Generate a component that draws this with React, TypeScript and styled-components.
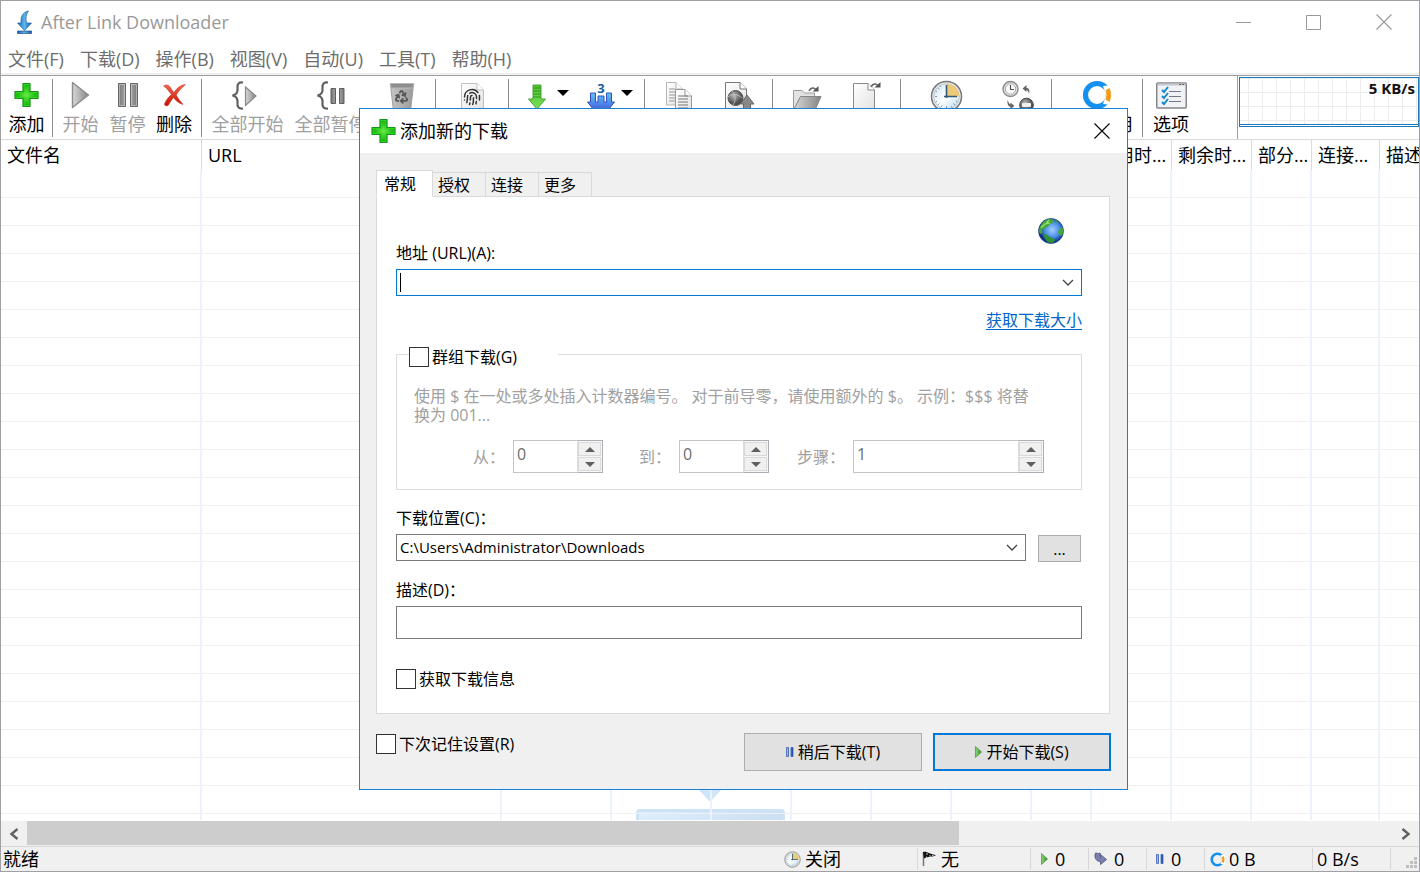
import React from "react";
import styled, { createGlobalStyle } from "styled-components";
import { Fingerprint, Recycle } from "lucide-react";

const GlobalStyle = createGlobalStyle`
  *, *::before, *::after { box-sizing: border-box; }
  html, body, #root { height: 100%; }
  body { margin: 0; background: #fff; overflow: hidden; }
  body, button, input, select {
    font-family: "Open Sans", "Noto Sans CJK SC", sans-serif;
    font-size: 18px;
    color: #000;
  }
  button { border: 0; background: none; padding: 0; margin: 0; }
  input { margin: 0; }
  svg { display: block; flex: none; overflow: visible; }
`;

/* ---------- main window ---------- */

const Window = styled.div`
  position: relative;
  display: flex;
  flex-direction: column;
  height: 100vh;
  border: 1px solid #a0a0a4;
  background: #fff;
  overflow: hidden;
`;

const TitleBar = styled.header`
  display: flex;
  align-items: center;
  height: 44px;
  flex: none;
  padding: 0 0 2px 14px;
`;

const Title = styled.h1`
  flex: 1;
  margin: 0;
  padding-left: 6px;
  font-size: 18px;
  line-height: 24px;
  font-weight: 400;
  color: #999;
`;

const CaptionButton = styled.button`
  width: 70px;
  height: 42px;
  display: flex;
  align-items: center;
  justify-content: center;
`;

const MenuBar = styled.nav`
  display: flex;
  gap: 16px;
  height: 31px;
  flex: none;
  padding-left: 7px;
  border-bottom: 1px solid #a0a0a0;
  box-shadow: inset 0 -2px #f0f0f0;
`;

const MenuItem = styled.button`
  height: 28px;
  line-height: 28px;
  color: #6d6d6d;
  white-space: nowrap;
`;

const ToolBar = styled.div`
  display: flex;
  height: 64px;
  flex: none;
  border-bottom: 1px solid #d9d9d9;
`;

const ToolGroup = styled.div<{ $flush?: boolean }>`
  display: flex;
  flex: none;
  margin: 3px 0 2px;
  padding: 0 ${(p) => (p.$flush ? 0 : 4)}px;
  border-right: 1px solid #8c8c8c;
`;

const SplitGroup = styled(ToolGroup)`
  gap: 12px;
  padding: 0 9px 0 10px;
`;

const ToolButton = styled.button<{ $width: number }>`
  display: flex;
  flex-direction: column;
  align-items: center;
  width: ${(p) => p.$width}px;
  white-space: nowrap;
  &:disabled { color: #a0a0a0; }
`;

const ToolIcon = styled.span`
  display: flex;
  align-items: center;
  justify-content: center;
  height: 35px;
`;

const ToolLabel = styled.span`
  line-height: 26px;
`;

const SplitTool = styled.div`
  display: flex;
`;

const CaretButton = styled.button`
  display: flex;
  justify-content: center;
  width: 16px;
  padding-top: 11px;
`;

const OptionsTool = styled.div`
  display: flex;
  margin: 3px 0 2px;
`;

const ToolSpacer = styled.div`
  flex: 1;
  display: flex;
  justify-content: flex-end;
`;

const SpeedGraph = styled.div`
  width: 182px;
  height: 63px;
  border-left: 1px solid #a0a0a0;
  padding: 1px 0 0 1px;
`;

const GraphBox = styled.div`
  height: 50px;
  padding: 0 3px;
  border: 1px solid #1979be;
  box-shadow: inset 0 -1px #fff, inset 0 -2px #1979be;
  background-image: linear-gradient(90deg, #ececec 1px, transparent 1px),
    linear-gradient(#ececec 1px, transparent 1px);
  background-size: 14px 14px;
  background-position: 8px 0;
  font-size: 15px;
  line-height: 20px;
  font-weight: 700;
  text-align: right;
  color: #111;
`;

/* ---------- download list ---------- */

const ListArea = styled.main`
  position: relative;
  flex: 1;
  min-height: 0;
  overflow: hidden;
`;

const DropHint = styled.div`
  position: absolute;
  left: 0;
  right: 0;
  bottom: 0;
  display: flex;
  flex-direction: column;
  align-items: center;
  gap: 8px;
`;

const DropHintBox = styled.div`
  width: 149px;
  height: 11px;
  border-radius: 4px 4px 0 0;
  background: linear-gradient(100deg, #dbeefd, #cbdff2);
  border: 3px solid #cbe2f7;
  border-bottom: 0;
`;

const ListTable = styled.table`
  position: relative;
  width: 100%;
  table-layout: fixed;
  border-collapse: separate;
  border-spacing: 0;
`;

const ListHead = styled.th`
  height: 30px;
  padding: 0 0 0 6px;
  border-right: 1px solid #dcdcdc;
  background: #fff;
  font-weight: 400;
  line-height: 30px;
  text-align: left;
  white-space: nowrap;
  overflow: hidden;
  &:last-child { border-right: 0; }
`;

const ListCell = styled.td`
  height: 28px;
  padding: 0;
  border-right: 2px solid #ecf2fc;
  border-bottom: 1px solid #f0f0f0;
  &:last-child { border-right: 0; }
`;

const ScrollBar = styled.div`
  display: flex;
  height: 25px;
  flex: none;
  margin-top: 1px;
  background: #f0f0f0;
`;

const ScrollButton = styled.button`
  display: flex;
  align-items: center;
  justify-content: center;
  width: 26px;
`;

const ScrollThumb = styled.div`
  flex: 932;
  height: 24px;
  background: #cdcdcd;
`;

const ScrollRest = styled.div`
  flex: 434;
`;

const StatusBar = styled.footer`
  display: grid;
  grid-template-columns: 1fr 138px 113px 58px 58px 58px 108px 78px 28px;
  height: 25px;
  flex: none;
  border-top: 1px solid #d7d7d7;
  background: #f0f0f0;
`;

const StatusCell = styled.div<{ $divider?: boolean; $indent?: number; $gap?: number }>`
  display: flex;
  align-items: center;
  gap: ${(p) => p.$gap ?? 4}px;
  padding-left: ${(p) => p.$indent ?? 4}px;
  margin: 1px 0;
  border-right: 1px solid ${(p) => (p.$divider ? "#d7d7d7" : "transparent")};
  line-height: 22px;
  white-space: nowrap;
`;

const SizeGrip = styled.div`
  display: flex;
  justify-content: flex-end;
  align-items: flex-end;
  padding: 0 2px 2px 0;
`;

/* ---------- add dialog ---------- */

const Dialog = styled.section`
  position: absolute;
  left: 358px;
  top: 107px;
  width: 769px;
  border: 1px solid #1a80d2;
  background: #f0f0f0;
  button, input, label, a, p { font-size: 16px; }
`;

const DialogTitleBar = styled.header`
  display: flex;
  align-items: center;
  gap: 4px;
  height: 44px;
  padding: 0 17px 0 11px;
  background: #fff;
`;

const DialogTitle = styled.h2`
  flex: 1;
  margin: 0;
  font-size: 18px;
  line-height: 24px;
  font-weight: 400;
`;

const DialogBody = styled.form`
  padding: 17px 16px 18px;
`;

const TabList = styled.div`
  display: flex;
  align-items: flex-end;
  position: relative;
  margin-bottom: -1px;
`;

const Tab = styled.button<{ $active?: boolean }>`
  width: ${(p) => (p.$active ? 57 : 53)}px;
  height: ${(p) => (p.$active ? 27 : 25)}px;
  padding: 0 0 0 ${(p) => (p.$active ? 7 : 5)}px;
  border: 1px solid #d9d9d9;
  border-left-width: ${(p) => (p.$active ? 1 : 0)}px;
  border-bottom-color: ${(p) => (p.$active ? "#fff" : "#d9d9d9")};
  background: ${(p) => (p.$active ? "#fff" : "#f0f0f0")};
  line-height: 24px;
  text-align: left;
`;

const Panel = styled.div`
  display: flex;
  flex-direction: column;
  margin-right: 1px;
  padding: 21px 27px 24px 19px;
  border: 1px solid #d9d9d9;
  background: #fff;
`;

const GlobeRow = styled.div`
  display: flex;
  justify-content: flex-end;
  height: 25px;
  padding-right: 18px;
`;

const FieldLabel = styled.label<{ $spaced?: boolean }>`
  margin-top: ${(p) => (p.$spaced ? 18 : 0)}px;
  margin-bottom: 6px;
  line-height: 20px;
`;

const Combo = styled.div<{ $focused?: boolean }>`
  position: relative;
  display: flex;
  align-items: center;
  flex: 1;
  height: 27px;
  padding-left: 3px;
  border: 1px solid ${(p) => (p.$focused ? "#0078d7" : "#7a7a7a")};
  background: #fff;
`;

const TextCursor = styled.span`
  width: 1px;
  height: 19px;
  background: #000;
`;

const ComboInput = styled.input`
  flex: 1;
  min-width: 0;
  height: 25px;
  padding: 0;
  border: 0;
  outline: 0;
  background: transparent;
  caret-color: transparent;
`;

const ComboSelect = styled.select`
  flex: 1;
  height: 25px;
  padding: 0 0 2px;
  border: 0;
  outline: 0;
  appearance: none;
  background: transparent;
  font-size: 15px;
`;

const ComboArrow = styled.span`
  display: flex;
  padding: 0 7px;
  pointer-events: none;
`;

const Row = styled.div`
  display: flex;
  gap: 12px;
`;

const SizeLink = styled.a`
  align-self: flex-end;
  margin-top: 14px;
  line-height: 20px;
  color: #0066cc;
  text-underline-offset: 3px;
`;

const GroupBox = styled.fieldset`
  min-width: 0;
  margin: 17px 0 0;
  padding: 0 12px 16px;
  border: 1px solid #dcdcdc;
`;

const GroupLegend = styled.legend`
  width: 149px;
  height: 14px;
  padding: 0;
`;

const Check = styled.label`
  display: flex;
  align-items: center;
  gap: 3px;
  line-height: 20px;
`;

const CheckBox = styled.input`
  appearance: none;
  width: 20px;
  height: 20px;
  border: 1px solid #333;
  background: #fff;
`;

const Hint = styled.p`
  margin: 26px 0 15px;
  padding: 0 32px 0 5px;
  line-height: 19px;
  color: #a0a0a0;
`;

const SpinRow = styled.div`
  display: grid;
  grid-template-columns: 104px 90px 76px 90px 84px minmax(0, 1fr);
  padding-right: 25px;
`;

const SpinLabel = styled.label`
  padding-right: 8px;
  height: 33px;
  line-height: 34px;
  text-align: right;
  color: #a0a0a0;
`;

const Spin = styled.div`
  display: flex;
  min-width: 0;
  height: 33px;
  border: 1px solid #c4c4c8;
`;

const SpinInput = styled.input`
  flex: 1;
  min-width: 0;
  height: 25px;
  padding: 0 0 0 3px;
  border: 0;
  appearance: textfield;
  background: transparent;
  color: #6d6d6d;
  &::-webkit-inner-spin-button { appearance: none; }
`;

const SpinButtons = styled.div`
  display: flex;
  flex-direction: column;
  gap: 1px;
  width: 26px;
  margin: -1px -1px -1px 0;
  padding: 1px 1px 1px 0;
  border: 1px solid #adadb5;
  border-left-color: #dcdcdc;
  background: #f7f7f7;
`;

const SpinButton = styled.button`
  flex: 1;
  display: flex;
  align-items: center;
  justify-content: center;
  border: 1px solid #d9d9d9;
  background: #f0f0f0;
`;

const PlainButton = styled.button`
  width: 43px;
  height: 27px;
  margin: 1px 1px 0 0;
  border: 1px solid #adadad;
  background: #e1e1e1;
`;

const TextField = styled.input`
  height: 33px;
  padding: 0 4px;
  border: 1px solid #7a7a7a;
  outline: 0;
`;

const InfoCheck = styled(Check)`
  margin-top: 30px;
`;

const DialogFooter = styled.footer`
  display: flex;
  align-items: flex-start;
  gap: 11px;
  padding-top: 19px;
`;

const RememberCheck = styled(Check)`
  flex: 1;
  margin-top: 1px;
`;

const ActionButton = styled.button<{ $primary?: boolean }>`
  display: flex;
  align-items: center;
  justify-content: center;
  gap: 4px;
  width: 178px;
  height: 38px;
  border: ${(p) => (p.$primary ? "2px solid #0078d7" : "1px solid #adadad")};
  background: #e1e1e1;
  line-height: 20px;
`;

/* ---------- icons ---------- */

const GradientDefs = styled.svg`
  position: absolute;
`;

const Gradients = () => (
  <GradientDefs width="0" height="0" aria-hidden="true">
    <defs>
      <radialGradient id="plus"><stop offset="0" stopColor="#6be84b" /><stop offset="1" stopColor="#0fbb08" /></radialGradient>
      <linearGradient id="grey"><stop offset="0" stopColor="#d8d8d8" /><stop offset="1" stopColor="#858585" /></linearGradient>
      <linearGradient id="metal"><stop offset="0" stopColor="#777" /><stop offset=".5" stopColor="#b4b4b4" /><stop offset="1" stopColor="#777" /></linearGradient>
      <linearGradient id="bin" x1="0" y1="0" x2="1" y2="0"><stop offset="0" stopColor="#c4c4c4" /><stop offset=".5" stopColor="#b0b0b0" /><stop offset="1" stopColor="#9a9a9a" /></linearGradient>
      <linearGradient id="red" x1="0" y1="0" x2="0" y2="1"><stop offset="0" stopColor="#f06a50" /><stop offset="1" stopColor="#c90d00" /></linearGradient>
      <linearGradient id="paper" x1="0" y1="0" x2="1" y2="1"><stop offset="0" stopColor="#fff" /><stop offset="1" stopColor="#e2e2e2" /></linearGradient>
      <linearGradient id="green" x1="0" y1="0" x2="0" y2="1"><stop offset="0" stopColor="#4fc02f" /><stop offset="1" stopColor="#7be05a" /></linearGradient>
      <linearGradient id="blue" x1="0" y1="0" x2="0" y2="1"><stop offset="0" stopColor="#5fc4f5" /><stop offset="1" stopColor="#4254dc" /></linearGradient>
      <radialGradient id="sea" cx=".55" cy=".45"><stop offset="0" stopColor="#a4ceff" /><stop offset=".6" stopColor="#4a8fe8" /><stop offset="1" stopColor="#0b2f8a" /></radialGradient>
      <radialGradient id="ball" cx=".4" cy=".35"><stop offset="0" stopColor="#bbb" /><stop offset="1" stopColor="#505050" /></radialGradient>
      <linearGradient id="face" x1="0" y1="0" x2="1" y2="1"><stop offset="0" stopColor="#cfe3f2" /><stop offset=".5" stopColor="#fff" /><stop offset="1" stopColor="#bcd8ec" /></linearGradient>
      <linearGradient id="app" x1="0" y1="0" x2="1" y2="0"><stop offset="0" stopColor="#1565b8" /><stop offset=".5" stopColor="#5db4ee" /><stop offset="1" stopColor="#1258a4" /></linearGradient>
      <linearGradient id="leaf"><stop offset="0" stopColor="#8fd67c" /><stop offset="1" stopColor="#2e8a24" /></linearGradient>
      <linearGradient id="bars"><stop offset="0" stopColor="#a9c8f8" /><stop offset="1" stopColor="#1c3f9c" /></linearGradient>
    </defs>
  </GradientDefs>
);

const AppIcon = () => (
  <svg width="20" height="24" viewBox="0 0 20 24">
    <path d="M13.500 1C7.500 2 5.500 7 6 13H2.500L9.500 20.500L16.500 13H11.500C10.500 8 11 4 13.500 1Z" fill="url(#app)" stroke="#1a5c9e" strokeWidth=".6" />
    <path d="M2.500 21H16.500V23.500H2.500Z" fill="url(#app)" stroke="#0f3f75" strokeWidth=".6" />
  </svg>
);

const PlusIcon = () => (
  <svg width="25" height="26" viewBox="0 0 25 26">
    <path d="M9 1.500H16V9.500H24V16.500H16V24.500H9V16.500H1V9.500H9Z" fill="#32d41d" stroke="#17921a" strokeWidth="1.200" strokeLinejoin="round" />
    <path d="M10.500 3H14.500V11H22.500V15H14.500V23H10.500V15H2.500V11H10.500Z" fill="url(#plus)" />
  </svg>
);

const PlayIcon = () => (
  <svg width="19" height="28" viewBox="0 0 19 28">
    <path d="M1.500 1.500L17.500 14L1.500 26.500Z" fill="url(#grey)" stroke="#8c8c8c" strokeWidth="1.400" strokeLinejoin="round" />
  </svg>
);

const PauseIcon = () => (
  <svg width="22" height="26" viewBox="0 0 22 26">
    <path d="M1.500 1.500H8.500V24.500H1.500ZM13.500 1.500H20.500V24.500H13.500Z" fill="url(#metal)" stroke="#666" />
    <path d="M2.500 2.500H7.500V23.500H2.500ZM14.500 2.500H19.500V23.500H14.500Z" fill="none" stroke="#c8c8c8" strokeWidth=".7" />
  </svg>
);

const DeleteIcon = () => (
  <svg width="26" height="26" viewBox="0 0 26 26">
    <path d="M2.500 4C5.500 2 8 3 9.500 5.500C10.500 7.500 12 9.500 13 10.500C16 6 19.500 3 24.500 2.500C21 5.500 17.500 9 15.200 13C17.500 17 19.500 19.500 22 22.500C17.500 21 14.500 18.500 12.500 15.500C10 18.500 8.500 21 7.500 23C6 24.500 3.500 24 3.500 22C4.500 18.500 7.500 15 10.500 12.500C8 9.500 6 6 2.500 4Z" fill="url(#red)" stroke="#c62316" strokeWidth=".5" />
  </svg>
);

const Brace = () => (
  <path d="M12 1.500C8 1 6 3 6.500 7C7 11 6 13.500 1.500 14.500C6 15.500 7 18 6.500 22C6 26 8 28 12 27.500" fill="none" stroke="#606060" strokeWidth="2.200" />
);

const PlayAllIcon = () => (
  <svg width="34" height="29" viewBox="0 0 34 29">
    <Brace />
    <path d="M14.500 6L25 15L14.500 24.500Z" fill="url(#grey)" stroke="#888" strokeWidth="1.200" />
  </svg>
);

const PauseAllIcon = () => (
  <svg width="30" height="29" viewBox="0 0 30 29">
    <Brace />
    <path d="M15 7.500H19.500V22.500H15ZM23.500 7.500H28V22.500H23.500Z" fill="url(#metal)" stroke="#5f5f5f" />
  </svg>
);

const IconStack = styled.span`
  display: grid;
  place-items: center;
  > * { grid-area: 1 / 1; }
`;

const BinIcon = () => (
  <IconStack>
    <svg width="26" height="30" viewBox="0 0 26 30">
      <path d="M1.500 3L4.500 29H21.500L24.500 3Z" fill="url(#bin)" stroke="#a0a0a0" />
      <path d="M1 1.500H25L24 6H2Z" fill="#8e8e8e" stroke="#b8b8b8" />
    </svg>
    <Recycle size={15} strokeWidth={3} color="#585858" />
  </IconStack>
);

const Sheet = ({ x = 0, y = 0, w = 22, h = 28, stroke = "#8a8a8a" }) => (
  <g transform={`translate(${x} ${y})`}>
    <path d={`M.5 .5H${w - 7}L${w - 0.5} 7V${h}H.5Z`} fill="url(#paper)" stroke={stroke} />
    <path d={`M${w - 7} .5V7H${w - 0.5}`} fill="#fff" stroke={stroke} />
  </g>
);

const FingerIcon = () => (
  <IconStack>
    <svg width="26" height="32" viewBox="0 0 26 32"><Sheet x={2} y={2} w={23} h={29} stroke="#c0c0c0" /></svg>
    <Fingerprint size={18} strokeWidth={2} color="#333" />
  </IconStack>
);

const DownIcon = () => (
  <svg width="20" height="26" viewBox="0 0 20 26">
    <path d="M6 1H14V15H18.500L10 25L1.500 15H6Z" fill="url(#green)" stroke="#4ba531" strokeLinejoin="round" />
    <path d="M6 4H14M6 7H14M6 10H14M6 13H14" stroke="#2f9a1c" strokeWidth="1.200" />
  </svg>
);

const TripleIcon = () => (
  <svg width="30" height="30" viewBox="0 0 30 30">
    <path d="M4.500 11H9.500V20H12V14H18V20H20.500V11H25.500V20H28.500L22.500 27.500L19.500 25L15 30L10.500 25L7.500 27.500L1.500 20H4.500Z" fill="url(#blue)" stroke="#3550bd" />
    <text x="15" y="11" textAnchor="middle" fontSize="13" fontWeight="700" fill="#17609f">3</text>
  </svg>
);

const CaretDown = () => (
  <svg width="12" height="6" viewBox="0 0 12 6"><path d="M0 0H12L6 6Z" fill="#000" /></svg>
);

const CopyIcon = () => (
  <svg width="28" height="30" viewBox="0 0 28 30">
    <Sheet x={1} y={0} w={17} h={23} stroke="#b5b5b5" />
    <path d="M4 7H10M4 10H10M4 13H10M4 16H10M4 19H10" stroke="#999" />
    <Sheet x={10} y={7} w={17} h={23} stroke="#999" />
    <path d="M13 14H23M13 17H23M13 20H23M13 23H23M13 26H23" stroke="#777" />
  </svg>
);

const WebPageIcon = () => (
  <svg width="30" height="30" viewBox="0 0 30 30">
    <Sheet x={1} y={0} w={22} h={29} stroke="#777" />
    <circle cx="11.500" cy="16" r="7.500" fill="url(#ball)" stroke="#555" />
    <path d="M4 15C8 11 14 12 18 16M8 9C12 13 12 19 9 23" fill="none" stroke="#c5c5c5" strokeWidth=".8" />
    <path d="M23 13L30 22H26.500V29H19.500V22H16.500Z" fill="#888" stroke="#666" />
  </svg>
);

const CurvedArrow = ({ x, y }: { x: number; y: number }) => (
  <g transform={`translate(${x} ${y})`}>
    <path d="M0 3C2 -1 6 -1 7.500 3" fill="none" stroke="#666" strokeWidth="1.600" />
    <path d="M3.500 3.500H9.500V-2Z" fill="#555" />
  </g>
);

const FolderIcon = () => (
  <svg width="30" height="30" viewBox="0 0 30 30">
    <path d="M1.500 28V8.500H10L12.500 11H22.500V28Z" fill="#e2e2e2" stroke="#9a9a9a" />
    <path d="M1.500 28L8.500 14.500H29L23 28Z" fill="url(#grey)" stroke="#858585" />
    <CurvedArrow x={17} y={6} />
  </svg>
);

const FileIcon = () => (
  <svg width="30" height="30" viewBox="0 0 30 30">
    <Sheet x={1} y={1} w={22} h={28} />
    <CurvedArrow x={19} y={2} />
  </svg>
);

const ClockIcon = ({ size = 33 }) => (
  <svg width={size} height={size} viewBox="0 0 33 33">
    <circle cx="16.500" cy="16.500" r="15" fill="#eee" stroke="#777" strokeWidth="1.500" />
    <circle cx="16.500" cy="16.500" r="12.800" fill="url(#face)" stroke="#b9c3ca" />
    <path d="M16.500 16.500V3.800A12.700 12.700 0 0 1 29.200 16.500Z" fill="#ecca78" />
    <path d="M16.500 5V18M14 16.500H27" stroke="#315878" strokeWidth="1.600" />
    <path d="M16.500 26V28.500M5 16.500H7M8 8L9.500 9.500M8 25L9.500 23.500M25 25L23.500 23.500M10 5.500L11 7M5.500 11L7 12M5.500 22L7 21M11 27L12 25.500M22 27.500L21 26M27.500 22L26 21" stroke="#7e9eb6" />
  </svg>
);

const SwapIcon = () => (
  <svg width="32" height="32" viewBox="0 0 32 32">
    <circle cx="8.500" cy="8" r="7.500" fill="#e4e4e4" stroke="#8a8a8a" strokeWidth="1.400" />
    <circle cx="8.500" cy="8" r="5.200" fill="#fafafa" stroke="#aaa" />
    <path d="M8.500 4V8.500H12" fill="none" stroke="#555" strokeWidth="1.200" />
    <path d="M27 13C28 9 27 7 24.500 7V4L20.500 7.500L24.500 11V9C26 9.500 26.500 11 27 13Z" fill="#666" />
    <path d="M5.500 19C5 23 6 25.500 8.500 26V28L12.500 25L8.500 21.500V23.500C7 23 6.500 21 5.500 19Z" fill="#666" />
    <circle cx="24.500" cy="24" r="6.800" fill="url(#ball)" stroke="#444" />
    <rect x="20" y="22" width="9" height="4" rx="1" fill="#eee" />
  </svg>
);

const RingIcon = ({ size = 30 }) => (
  <svg width={size} height={size} viewBox="0 0 30 30">
    <circle cx="15" cy="15" r="11.500" fill="none" stroke="#1490ee" strokeWidth="5.200" />
    <path d="M21 6L30 5V25L21 24L24 15Z" fill="#fff" />
    <path d="M23.500 10.500L27.500 8C29.500 12 29.500 18 27.500 22L23.500 19.500C24.800 16 24.800 13 23.500 10.500Z" fill="#f29a16" />
  </svg>
);

const OptionsIcon = () => (
  <svg width="31" height="27" viewBox="0 0 31 27">
    <rect x=".75" y="1" width="29.500" height="25" rx="1" fill="#f1f2f5" stroke="#84868c" strokeWidth="1.500" />
    <path d="M2 2.500H29" stroke="#c6c8d0" strokeWidth="2" />
    <path d="M23 2.500H25M26 2.500H28" stroke="#666" />
    <path d="M13 9.500H25M13 14.500H25M13 19.500H25" stroke="#77778c" />
    <path d="M6 8L8 10L12 5M6 14L8 16L12 11M6 20L8 22L12 17" fill="none" stroke="#1489c4" strokeWidth="2" />
  </svg>
);

const GlobeIcon = () => (
  <svg width="26" height="26" viewBox="0 0 26 26">
    <circle cx="13" cy="13" r="12.500" fill="url(#sea)" stroke="#14366e" strokeWidth=".6" />
    <path d="M1 14C1 7 6 1.500 12 1L16 2L15 5L12 6L10 8.500L6.500 10.500L4 12L4.500 15L2.500 16Z" fill="#46a83c" />
    <path d="M11 2L9 4L11 5L7 6L5 8L3 9.500" fill="none" stroke="#a4e070" strokeWidth="1.200" />
    <path d="M5 16L8.500 16.500L12 19L16 20.500L17 22.500L14.500 25L10 24.500C7.500 22 6 19 5 16Z" fill="#2f9136" />
    <path d="M24 9C25.800 12 25.500 15 23.500 18L21 17L20 14L21.500 11ZM17 2L20 3.500L18.500 5Z" fill="#46a83c" />
  </svg>
);

const CloseGlyph = ({ color }: { color: string }) => (
  <svg width="16" height="16" viewBox="0 0 16 16"><path d="M.5 .5L15.500 15.500M15.500 .5L.5 15.500" stroke={color} strokeWidth="1.100" /></svg>
);

const Chevron = () => (
  <svg width="12" height="8" viewBox="0 0 12 8"><path d="M1 1L6 6L11 1" fill="none" stroke="#444" strokeWidth="1.300" /></svg>
);

const Arrow = ({ down = false }) => (
  <svg width="10" height="5" viewBox="0 0 10 5"><path d={down ? "M0 0H10L5 5Z" : "M0 5H10L5 0Z"} fill="#606060" /></svg>
);

const MiniPlay = () => (
  <svg width="7" height="12" viewBox="0 0 7 12"><path d="M.5 .5L6.500 6L.5 11.500Z" fill="url(#leaf)" stroke="#3f8f35" strokeWidth=".7" /></svg>
);

const MiniPause = () => (
  <svg width="8" height="10" viewBox="0 0 8 10"><path d="M.5 .5H2.500V9.500H.5ZM5 .5H7V9.500H5Z" fill="url(#bars)" stroke="#3b62b8" strokeWidth=".8" /></svg>
);

const QueueIcon = () => (
  <svg width="14" height="14" viewBox="0 0 14 14"><path d="M4.500 1.500L1.500 1C0 5 1.500 9.500 6.500 9.500V12.500L12.500 7.500L6.500 2.500V6C5 5.500 5 3.500 6.500 2.500L6 1Z" fill="#7a80ac" stroke="#4a4e78" strokeWidth=".8" /></svg>
);

const FlagIcon = () => (
  <svg width="15" height="16" viewBox="0 0 15 16">
    <path d="M1.500 1V15" stroke="#777" strokeWidth="1.500" />
    <path d="M1 1C5 0 8 3.500 14 4C11 6.500 6 5 2 7.500Z" fill="#111" />
    <path d="M4 3H6M7 5H9M4 6H5M10 4.500H11.500" stroke="#eee" strokeWidth=".8" />
  </svg>
);

const GripDots = () => (
  <svg width="12" height="12" viewBox="0 0 12 12">
    <path d="M9 0H12V3H9ZM5 4H8V7H5ZM9 4H12V7H9ZM1 8H4V11H1ZM5 8H8V11H5ZM9 8H12V11H9Z" fill="#bfbfbf" />
  </svg>
);

/* ---------- data ---------- */

const menus = ["文件(F)", "下载(D)", "操作(B)", "视图(V)", "自动(U)", "工具(T)", "帮助(H)"];

const columns: { label?: string; width?: number }[] = [
  { label: "文件名", width: 201 },
  { label: "URL", width: 300 },
  { width: 110 }, { width: 100 }, { width: 80 }, { width: 80 }, { width: 80 }, { width: 80 }, { width: 60 },
  { label: "已用时...", width: 80 },
  { label: "剩余时...", width: 80 },
  { label: "部分...", width: 60 },
  { label: "连接...", width: 68 },
  { label: "描述" },
];

const rows = Array.from({ length: 60 }, (_, i) => i);

type ToolProps = { icon: React.ReactNode; label?: string; name?: string; width: number; disabled?: boolean };

const Tool = ({ icon, label, name, width, disabled }: ToolProps) => (
  <ToolButton $width={width} disabled={disabled} aria-label={name}>
    <ToolIcon>{icon}</ToolIcon>
    {label && <ToolLabel>{label}</ToolLabel>}
  </ToolButton>
);

const Spinner = ({ id, label, value }: { id: string; label: string; value: number }) => (
  <>
    <SpinLabel htmlFor={id}>{label}</SpinLabel>
    <Spin>
      <SpinInput id={id} type="number" defaultValue={value} disabled />
      <SpinButtons>
        <SpinButton type="button" disabled aria-label="增加"><Arrow /></SpinButton>
        <SpinButton type="button" disabled aria-label="减少"><Arrow down /></SpinButton>
      </SpinButtons>
    </Spin>
  </>
);

const AddDialog = () => (
  <Dialog role="dialog" aria-labelledby="dialog-title">
    <DialogTitleBar>
      <PlusIcon />
      <DialogTitle id="dialog-title">添加新的下载</DialogTitle>
      <button aria-label="关闭"><CloseGlyph color="#000" /></button>
    </DialogTitleBar>
    <DialogBody onSubmit={(e) => e.preventDefault()}>
      <TabList role="tablist">
        {["常规", "授权", "连接", "更多"].map((t, i) => (
          <Tab key={t} type="button" role="tab" aria-selected={i === 0} $active={i === 0}>{t}</Tab>
        ))}
      </TabList>
      <Panel role="tabpanel">
        <GlobeRow><GlobeIcon /></GlobeRow>
        <FieldLabel htmlFor="url">地址 (URL)(A):</FieldLabel>
        <Row>
          <Combo $focused>
            <TextCursor />
            <ComboInput id="url" type="text" />
            <ComboArrow><Chevron /></ComboArrow>
          </Combo>
        </Row>
        <SizeLink href="#size">获取下载大小</SizeLink>
        <GroupBox>
          <GroupLegend>
            <Check><CheckBox type="checkbox" />群组下载(G)</Check>
          </GroupLegend>
          <Hint>使用 $ 在一处或多处插入计数器编号。 对于前导零，请使用额外的 $。 示例：$$$ 将替换为 001...</Hint>
          <SpinRow>
            <Spinner id="from" label="从：" value={0} />
            <Spinner id="to" label="到：" value={0} />
            <Spinner id="step" label="步骤：" value={1} />
          </SpinRow>
        </GroupBox>
        <FieldLabel htmlFor="location" $spaced>下载位置(C)：</FieldLabel>
        <Row>
          <Combo>
            <ComboSelect id="location" defaultValue="downloads">
              <option value="downloads">C:\Users\Administrator\Downloads</option>
            </ComboSelect>
            <ComboArrow><Chevron /></ComboArrow>
          </Combo>
          <PlainButton type="button">...</PlainButton>
        </Row>
        <FieldLabel htmlFor="description" $spaced>描述(D)：</FieldLabel>
        <TextField id="description" type="text" />
        <InfoCheck><CheckBox type="checkbox" />获取下载信息</InfoCheck>
      </Panel>
      <DialogFooter>
        <RememberCheck><CheckBox type="checkbox" />下次记住设置(R)</RememberCheck>
        <ActionButton type="button"><MiniPause />稍后下载(T)</ActionButton>
        <ActionButton type="submit" $primary><MiniPlay />开始下载(S)</ActionButton>
      </DialogFooter>
    </DialogBody>
  </Dialog>
);

export default function App() {
  return (
    <Window>
      <GlobalStyle />
      <Gradients />
      <TitleBar>
        <AppIcon />
        <Title>After Link Downloader</Title>
        <CaptionButton aria-label="最小化">
          <svg width="16" height="16" viewBox="0 0 16 16"><path d="M0 8.500H15" stroke="#999" /></svg>
        </CaptionButton>
        <CaptionButton aria-label="最大化">
          <svg width="16" height="16" viewBox="0 0 16 16"><path d="M.5 1.500H14.500V15.500H.5Z" fill="none" stroke="#999" /></svg>
        </CaptionButton>
        <CaptionButton aria-label="关闭"><CloseGlyph color="#999" /></CaptionButton>
      </TitleBar>
      <MenuBar>
        {menus.map((m) => <MenuItem key={m}>{m}</MenuItem>)}
      </MenuBar>
      <ToolBar>
        <ToolGroup $flush><Tool width={51} icon={<PlusIcon />} label="添加" /></ToolGroup>
        <ToolGroup>
          <Tool width={47} icon={<PlayIcon />} label="开始" disabled />
          <Tool width={47} icon={<PauseIcon />} label="暂停" disabled />
          <Tool width={46} icon={<DeleteIcon />} label="删除" />
        </ToolGroup>
        <ToolGroup>
          <Tool width={83} icon={<PlayAllIcon />} label="全部开始" disabled />
          <Tool width={83} icon={<PauseAllIcon />} label="全部暂停" disabled />
          <Tool width={59} icon={<BinIcon />} name="清空" disabled />
        </ToolGroup>
        <ToolGroup><Tool width={64} icon={<FingerIcon />} name="校验" /></ToolGroup>
        <SplitGroup>
          <SplitTool>
            <Tool width={36} icon={<DownIcon />} name="速度" />
            <CaretButton aria-label="速度选项"><CaretDown /></CaretButton>
          </SplitTool>
          <SplitTool>
            <Tool width={36} icon={<TripleIcon />} name="任务数" />
            <CaretButton aria-label="任务数选项"><CaretDown /></CaretButton>
          </SplitTool>
        </SplitGroup>
        <ToolGroup>
          <Tool width={60} icon={<CopyIcon />} name="复制" disabled />
          <Tool width={59} icon={<WebPageIcon />} name="网页" disabled />
        </ToolGroup>
        <ToolGroup>
          <Tool width={60} icon={<FolderIcon />} name="打开文件夹" disabled />
          <Tool width={59} icon={<FileIcon />} name="打开文件" disabled />
        </ToolGroup>
        <ToolGroup>
          <Tool width={83} icon={<ClockIcon />} name="计划" />
          <Tool width={59} icon={<SwapIcon />} name="自动" disabled />
        </ToolGroup>
        <ToolGroup><Tool width={82} icon={<RingIcon />} label="流量使用" /></ToolGroup>
        <OptionsTool><Tool width={56} icon={<OptionsIcon />} label="选项" /></OptionsTool>
        <ToolSpacer>
          <SpeedGraph><GraphBox>5 KB/s</GraphBox></SpeedGraph>
        </ToolSpacer>
      </ToolBar>
      <ListArea>
        <DropHint>
          <svg width="22" height="11" viewBox="0 0 22 11"><path d="M0 0H22L12 11H10Z" fill="#cfe5f9" /></svg>
          <DropHintBox />
        </DropHint>
        <ListTable>
          <colgroup>
            {columns.map((c, i) => <col key={i} width={c.width} />)}
          </colgroup>
          <thead>
            <tr>{columns.map((c, i) => <ListHead key={i}>{c.label}</ListHead>)}</tr>
          </thead>
          <tbody>
            {rows.map((r) => (
              <tr key={r}>{columns.map((_, i) => <ListCell key={i} />)}</tr>
            ))}
          </tbody>
        </ListTable>
      </ListArea>
      <ScrollBar>
        <ScrollButton aria-label="向左滚动">
          <svg width="10" height="12" viewBox="0 0 10 12"><path d="M8.500 1L2.500 6L8.500 11" fill="none" stroke="#606060" strokeWidth="2.400" /></svg>
        </ScrollButton>
        <ScrollThumb />
        <ScrollRest />
        <ScrollButton aria-label="向右滚动">
          <svg width="10" height="12" viewBox="0 0 10 12"><path d="M1.500 1L7.500 6L1.500 11" fill="none" stroke="#606060" strokeWidth="2.400" /></svg>
        </ScrollButton>
      </ScrollBar>
      <StatusBar>
        <StatusCell $indent={2}>就绪</StatusCell>
        <StatusCell $divider><ClockIcon size={17} />关闭</StatusCell>
        <StatusCell $divider><FlagIcon />无</StatusCell>
        <StatusCell $divider $indent={10} $gap={7}><MiniPlay />0</StatusCell>
        <StatusCell $divider $indent={5} $gap={6}><QueueIcon />0</StatusCell>
        <StatusCell $divider $indent={9} $gap={7}><MiniPause />0</StatusCell>
        <StatusCell $divider $indent={5}><RingIcon size={15} />0 B</StatusCell>
        <StatusCell $divider>0 B/s</StatusCell>
        <SizeGrip><GripDots /></SizeGrip>
      </StatusBar>
      <AddDialog />
    </Window>
  );
}
